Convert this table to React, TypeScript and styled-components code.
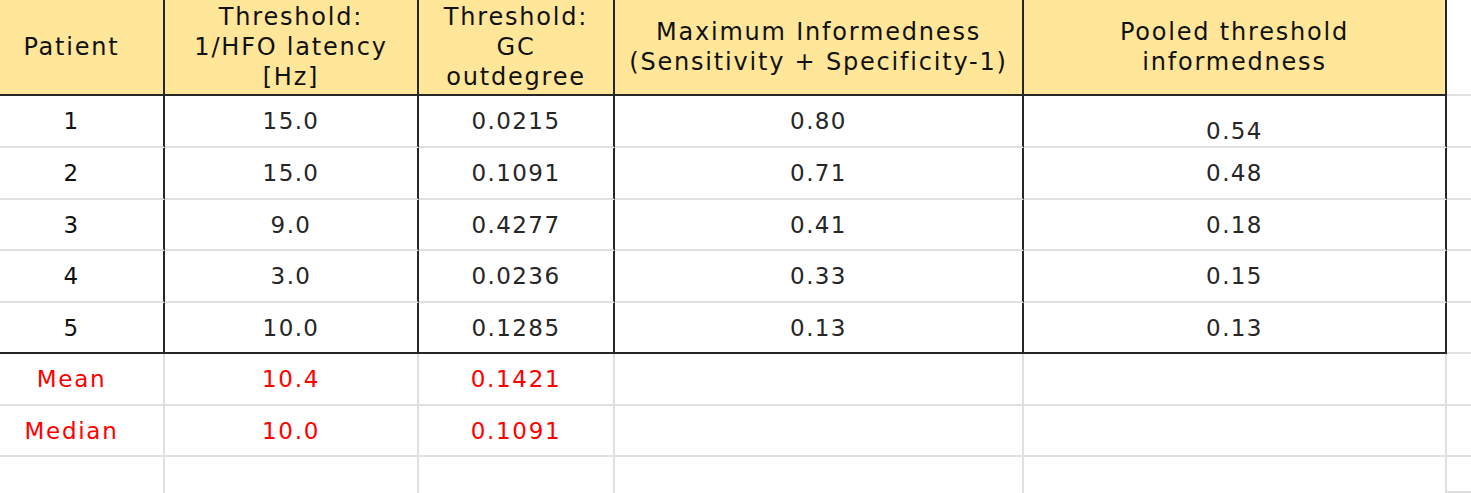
import React from "react";
import styled, { createGlobalStyle } from "styled-components";

const Global = createGlobalStyle`
  html, body { margin: 0; padding: 0; background: #ffffff; }
  body { width: 1471px; height: 493px; overflow: hidden; }
`;

const DARK = "#262626";
const LIGHT = "#e0e0e0";

const Sheet = styled.div`
  display: grid;
  grid-template-columns: 165px 254px 196px 409px 423px 24px;
  grid-template-rows: 96px 52px 52px 51px 52px 51px 52px 51px 36px;
  width: 1471px;
  height: 493px;
  background: #ffffff;
  font-family: "DejaVu Sans", Verdana, sans-serif;
`;

const Cell = styled.div<{
  $head?: boolean;
  $right?: "dark" | "light";
  $bottom?: "dark" | "light" | "none";
  $red?: boolean;
  $first?: boolean;
  $align?: "center" | "end";
}>`
  box-sizing: border-box;
  display: flex;
  align-items: ${(p) => (p.$align === "end" ? "flex-end" : "center")};
  justify-content: center;
  text-align: center;
  padding-bottom: ${(p) => (p.$align === "end" ? "1px" : "0")};
  padding-right: ${(p) => (p.$first ? "20px" : "0")};
  background: ${(p) => (p.$head ? "#ffe699" : "#ffffff")};
  border-right: 2px solid
    ${(p) => (p.$right === "dark" ? DARK : LIGHT)};
  border-bottom: ${(p) =>
    p.$bottom === "none"
      ? "0"
      : `2px solid ${p.$bottom === "dark" ? DARK : LIGHT}`};
  color: ${(p) =>
    p.$red ? "#ff0000" : p.$head || p.$first ? "#111111" : "#262626"};
  font-size: ${(p) => (p.$head ? "24px" : "23px")};
  line-height: ${(p) => (p.$head ? "30px" : "28px")};
  letter-spacing: ${(p) =>
    p.$head ? "1.8px" : p.$red ? "1.7px" : "1.4px"};
  white-space: nowrap;
`;

const EdgeCell = styled.div`
  box-sizing: border-box;
  border-bottom: 2px solid ${LIGHT};
  background: #ffffff;
`;

const headers = [
  ["Patient"],
  ["Threshold:", "1/HFO latency", "[Hz]"],
  ["Threshold:", "GC", "outdegree"],
  ["Maximum Informedness", "(Sensitivity + Specificity-1)"],
  ["Pooled threshold", "informedness"],
];

const rows = [
  ["1", "15.0", "0.0215", "0.80", "0.54"],
  ["2", "15.0", "0.1091", "0.71", "0.48"],
  ["3", "9.0", "0.4277", "0.41", "0.18"],
  ["4", "3.0", "0.0236", "0.33", "0.15"],
  ["5", "10.0", "0.1285", "0.13", "0.13"],
];

const stats = [
  ["Mean", "10.4", "0.1421", "", ""],
  ["Median", "10.0", "0.1091", "", ""],
  ["", "", "", "", ""],
];

export default function App() {
  return (
    <>
      <Global />
      <Sheet>
        {headers.map((lines, i) => (
          <Cell
            key={`h${i}`}
            $head
            $first={i === 0}
            $right="dark"
            $bottom="dark"
          >
            <div>
              {lines.map((l, j) => (
                <div key={j}>{l}</div>
              ))}
            </div>
          </Cell>
        ))}
        <EdgeCell />
        {rows.map((r, ri) => [
          ...r.map((v, ci) => (
            <Cell
              key={`r${ri}c${ci}`}
              $first={ci === 0}
              $right="dark"
              $bottom={ri === rows.length - 1 ? "dark" : "light"}
              $align={ri === 0 && ci === 4 ? "end" : "center"}
            >
              {v}
            </Cell>
          )),
          <EdgeCell key={`r${ri}e`} />,
        ])}
        {stats.map((r, ri) => [
          ...r.map((v, ci) => (
            <Cell
              key={`s${ri}c${ci}`}
              $first={ci === 0}
              $right="light"
              $bottom={ri === stats.length - 1 ? "none" : "light"}
              $red
            >
              {v}
            </Cell>
          )),
          <EdgeCell key={`s${ri}e`} />,
        ])}
      </Sheet>
    </>
  );
}
